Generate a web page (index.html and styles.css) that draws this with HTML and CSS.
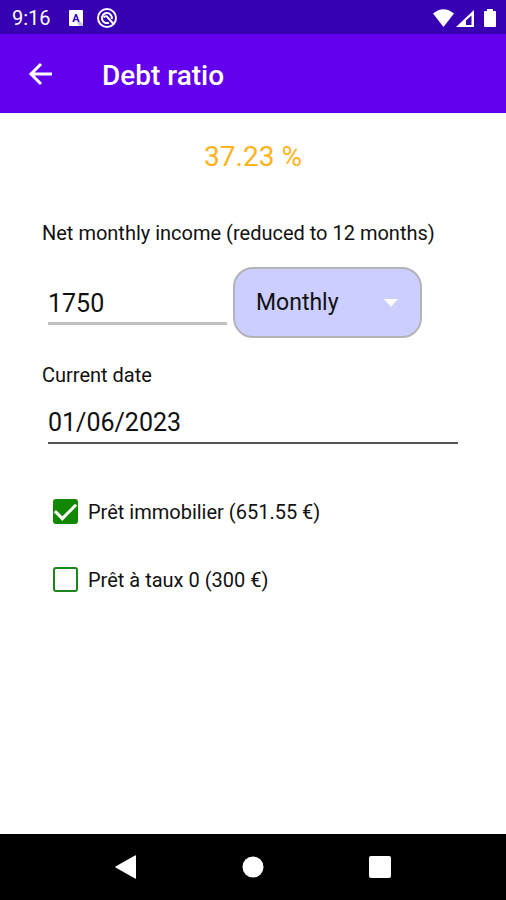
FILE: index.html
```html
<!DOCTYPE html>
<html lang="en">
<head>
<meta charset="utf-8">
<meta name="viewport" content="width=device-width, initial-scale=1">
<title>Debt ratio</title>
<link rel="stylesheet" href="styles.css">
</head>
<body>
<div class="status-bar">
  <span class="clock">9:16</span>
  <svg class="status-app" width="14" height="16" viewBox="0 0 14 16" aria-hidden="true">
    <rect width="14" height="16" rx="1" fill="#fff"/>
    <path d="M8 12H12L14 14V15L13 16H10Z" fill="#c9bdec"/>
    <text x="7" y="12" text-anchor="middle" class="status-letter">A</text>
  </svg>
  <svg class="status-sync" width="20" height="20" viewBox="0 0 20 20" fill="none" stroke="#fff" aria-hidden="true">
    <circle cx="10" cy="10" r="9" stroke-width="2"/>
    <path d="M12 14.600A5 5 0 1 1 14.800 11" stroke-width="2"/>
    <path d="M6.500 9.500Q8 7.500 10 8.500L17 16.500" stroke-width="2"/>
  </svg>
  <svg class="status-system" width="64" height="20" viewBox="0 0 64 20" fill="#fff" aria-hidden="true">
    <path d="M1 5.500Q11.500 -3 22 5.500L11.500 19Z"/>
    <path fill-rule="evenodd" d="M24 19L42 2V19ZM34 12.500V17H39.500V7.500Z"/>
    <path d="M55 1H61V3H63Q64 3 64 4V18Q64 19 63 19H53Q52 19 52 18V4Q52 3 53 3H55Z"/>
  </svg>
</div>
<header class="app-bar">
  <button class="back" type="button" aria-label="Back">
    <svg width="24" height="24" viewBox="0 0 24 24" fill="none" stroke="#fff" stroke-width="3" aria-hidden="true">
      <path d="M24 12H3M13 2L3 12L13 22"/>
    </svg>
  </button>
  <h1 class="title">Debt ratio</h1>
</header>
<main class="content">
  <output class="ratio">37.23 %</output>
  <label class="label" for="income">Net monthly income (reduced to 12 months)</label>
  <div class="income-row">
    <input class="field field-income" id="income" type="text" inputmode="numeric" value="1750">
    <div class="picker">
      <select class="period" aria-label="Period">
        <option selected>Monthly</option>
      </select>
      <svg class="caret" width="14" height="8" viewBox="0 0 14 8" aria-hidden="true"><path d="M0 0H14L7 8Z" fill="#fff"/></svg>
    </div>
  </div>
  <label class="label" for="date">Current date</label>
  <input class="field field-date" id="date" type="text" value="01/06/2023">
  <div class="loans">
    <label class="loan"><input class="tick" type="checkbox" checked>Prêt immobilier (651.55 €)</label>
    <label class="loan"><input class="tick" type="checkbox">Prêt à taux 0 (300 €)</label>
  </div>
</main>
<nav class="nav-bar" aria-label="System">
  <button class="nav-button" type="button" aria-label="Back"><svg width="24" height="24" viewBox="0 0 24 24" fill="#fff"><path d="M1.500 11.500L21 0.500Q22 0 22 1V23Q22 24 21 23.500L1.500 12.500Q1 12 1.500 11.500Z"/></svg></button>
  <button class="nav-button" type="button" aria-label="Home"><svg width="24" height="24" viewBox="0 0 24 24" fill="#fff"><circle cx="12" cy="12" r="10.500"/></svg></button>
  <button class="nav-button" type="button" aria-label="Recents"><svg width="24" height="24" viewBox="0 0 24 24" fill="#fff"><rect x="1" y="1" width="22" height="22" rx="2"/></svg></button>
</nav>
</body>
</html>
```
FILE: styles.css
```css
* {
  box-sizing: border-box;
}

body {
  margin: 0;
  min-height: 100vh;
  display: flex;
  flex-direction: column;
  background: #fff;
  color: #111;
  font-family: Roboto, "Liberation Sans", sans-serif;
  font-size: 20px;
  line-height: 24px;
}

button {
  padding: 0;
  border: 0;
  background: none;
  display: flex;
  align-items: center;
  justify-content: center;
}

.status-bar {
  height: 34px;
  padding: 2px 10px 0 12px;
  display: flex;
  align-items: center;
  background: #3700b3;
  color: #fff;
}

.status-app {
  margin-left: 18px;
}

.status-letter {
  font-size: 11px;
  font-weight: 700;
  fill: #3700b3;
}

.status-sync {
  margin-left: 14px;
}

.status-system {
  margin-left: auto;
}

.app-bar {
  height: 79px;
  padding: 0 28px;
  display: flex;
  align-items: center;
  gap: 50px;
  background: #6200ee;
  color: #fff;
}

.title {
  margin: 0;
  padding-top: 4px;
  font-size: 28px;
  font-weight: 500;
  line-height: 32px;
}

.content {
  flex: 1;
  padding: 28px 42px;
  display: flex;
  flex-direction: column;
}

.ratio {
  margin-bottom: 48px;
  color: #ffb31a;
  font-size: 28px;
  line-height: 32px;
  text-align: center;
}

.income-row {
  margin: 22px 0 25px;
  display: flex;
  align-items: center;
  gap: 6px;
}

.field {
  min-width: 0;
  margin-left: 6px;
  padding: 4px 0 0;
  border: 0;
  background: none;
  color: inherit;
  font: inherit;
  font-size: 25px;
  line-height: 32px;
}

.field-income {
  flex: 179;
  height: 44px;
  border-bottom: 3px solid #c0c0c0;
}

.picker {
  flex: 189;
  margin-right: 42px;
  display: grid;
  align-items: center;
}

.period {
  grid-area: 1 / 1;
  width: 100%;
  height: 71px;
  padding: 0 21px;
  border: 2px solid #b4b4b8;
  border-radius: 20px;
  appearance: none;
  background: #cbceff;
  color: inherit;
  font: inherit;
  font-size: 23px;
  line-height: 32px;
}

.caret {
  grid-area: 1 / 1;
  justify-self: end;
  margin-right: 24px;
  pointer-events: none;
}

.field-date {
  height: 46px;
  margin-top: 11px;
  margin-right: 6px;
  border-bottom: 2px solid #555;
}

.loans {
  margin-top: 55px;
  display: grid;
  gap: 43px;
}

.loan {
  padding-left: 11px;
  display: flex;
  align-items: center;
  gap: 10px;
}

.tick {
  flex: none;
  width: 25px;
  height: 25px;
  margin: 0;
  border: 2px solid #1f851f;
  border-radius: 3px;
  appearance: none;
  display: grid;
  place-items: center;
}

.tick:checked {
  border-color: #118800;
  background: #118800;
}

.tick:checked::before {
  content: "";
  width: 18px;
  height: 9px;
  margin-top: -5px;
  border: solid #fff;
  border-width: 0 0 3px 3px;
  transform: rotate(-45deg);
}

.nav-bar {
  height: 66px;
  padding: 0 62px;
  display: flex;
  align-items: center;
  background: #000;
}

.nav-button {
  flex: 1;
  height: 48px;
}
```
